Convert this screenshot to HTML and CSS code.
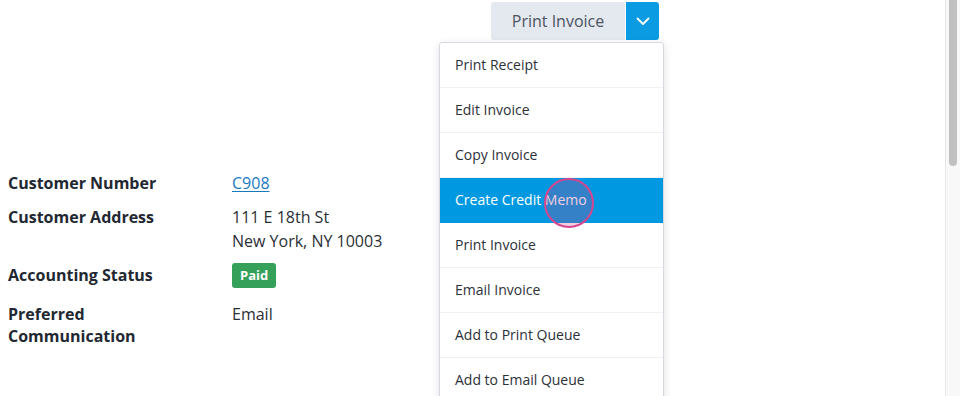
FILE: index.html
```html
<!DOCTYPE html>
<html>
<head>
<meta charset="utf-8">
<link rel="stylesheet" href="styles.css">
</head>
<body>
<div class="page">
  <div class="toolbar">
    <div class="btn-group">
      <button class="btn-main">Print Invoice</button>
      <button class="btn-caret" aria-label="More">
        <svg width="14" height="9" viewBox="0 0 14 9"><path d="M1.5 1.5 L7 7 L12.5 1.5" fill="none" stroke="#fff" stroke-width="1.8" stroke-linecap="round" stroke-linejoin="round"/></svg>
      </button>
      <ul class="menu">
        <li class="item">Print Receipt</li>
        <li class="item">Edit Invoice</li>
        <li class="item">Copy Invoice</li>
        <li class="item active">Create Credit Memo<span class="cursor"></span></li>
        <li class="item">Print Invoice</li>
        <li class="item">Email Invoice</li>
        <li class="item">Add to Print Queue</li>
        <li class="item">Add to Email Queue</li>
      </ul>
    </div>
  </div>
  <dl class="details">
    <dt>Customer Number</dt>
    <dd><a href="#" class="link">C908</a></dd>
    <dt>Customer Address</dt>
    <dd>111 E 18th St<br>New York, NY 10003</dd>
    <dt>Accounting Status</dt>
    <dd class="badge-row"><span class="badge">Paid</span></dd>
    <dt class="multi">Preferred<br>Communication</dt>
    <dd>Email</dd>
  </dl>
</div>
<div class="scrollbar"><div class="thumb"></div></div>
</body>
</html>
```
FILE: styles.css
```css
* { box-sizing: border-box; }
html, body { margin: 0; padding: 0; background: #fff; overflow: hidden; }
body {
  font-family: "Open Sans", "Noto Sans", sans-serif;
  color: #2a2f36;
  width: 960px;
  height: 396px;
}
.page {
  width: 659px;
  padding: 2px 0 0 8px;
}
.toolbar {
  display: flex;
  justify-content: flex-end;
  height: 38px;
}
.btn-group {
  position: relative;
  display: flex;
  height: 38px;
}
.btn-main {
  width: 134px;
  height: 38px;
  border: 0;
  margin: 0;
  padding: 0;
  background: #e4e8ef;
  color: #4c5462;
  font-family: "Open Sans", sans-serif;
  font-size: 16px;
  border-radius: 3px 0 0 3px;
  margin-right: 1px;
}
.btn-caret {
  width: 33px;
  height: 38px;
  border: 0;
  margin: 0;
  padding: 0;
  background: #0a9be2;
  border-radius: 0 3px 3px 0;
  display: flex;
  align-items: center;
  justify-content: center;
}
.btn-caret svg { display: block; margin-top: 1px; }
.menu {
  position: absolute;
  top: 40px;
  left: -52px;
  width: 225px;
  margin: 0;
  padding: 0;
  list-style: none;
  background: #fff;
  border: 1px solid #d6dae0;
  border-radius: 3px;
  box-shadow: 0 2px 8px rgba(0,0,0,0.12);
  z-index: 5;
}
.item {
  position: relative;
  height: 45px;
  line-height: 44px;
  padding-left: 15px;
  font-size: 14px;
  color: #2c3138;
  border-bottom: 1px solid #edf0f4;
}
.item.active {
  background: #0099e1;
  color: #fff;
  border-bottom-color: #0099e1;
}
.cursor {
  position: absolute;
  left: 104px;
  top: 0px;
  width: 50px;
  height: 50px;
  border-radius: 50%;
  border: 2px solid #d6468f;
  background: rgba(205, 60, 130, 0.26);
  pointer-events: none;
}
.details {
  margin: 131px 0 0 0;
  display: grid;
  grid-template-columns: 224px auto;
  row-gap: 10px;
  font-size: 16px;
  line-height: 24px;
}
.details dt {
  font-weight: 700;
  color: #222831;
  margin: 0;
}
.details dt.multi {
  line-height: 22px;
  padding-top: 1px;
}
.details dd {
  margin: 0;
  color: #2a2f36;
}
.link {
  color: #1979bf;
  text-decoration: underline;
  text-underline-offset: 2px;
}
.badge-row { height: 29px; }
.badge {
  display: inline-block;
  height: 25px;
  line-height: 25px;
  padding: 0 8px;
  background: #35a05a;
  color: #fff;
  font-weight: 700;
  font-size: 13px;
  border-radius: 3px;
  vertical-align: top;
}
.scrollbar {
  position: fixed;
  top: 0;
  right: 0;
  width: 15px;
  height: 396px;
  background: #f8f8f8;
  border-left: 1px solid #e8e8e8;
}
.thumb {
  position: absolute;
  left: 3px;
  top: 0;
  width: 8px;
  height: 166px;
  background: #c1c1c1;
  border-radius: 0 0 4px 4px;
}
```
